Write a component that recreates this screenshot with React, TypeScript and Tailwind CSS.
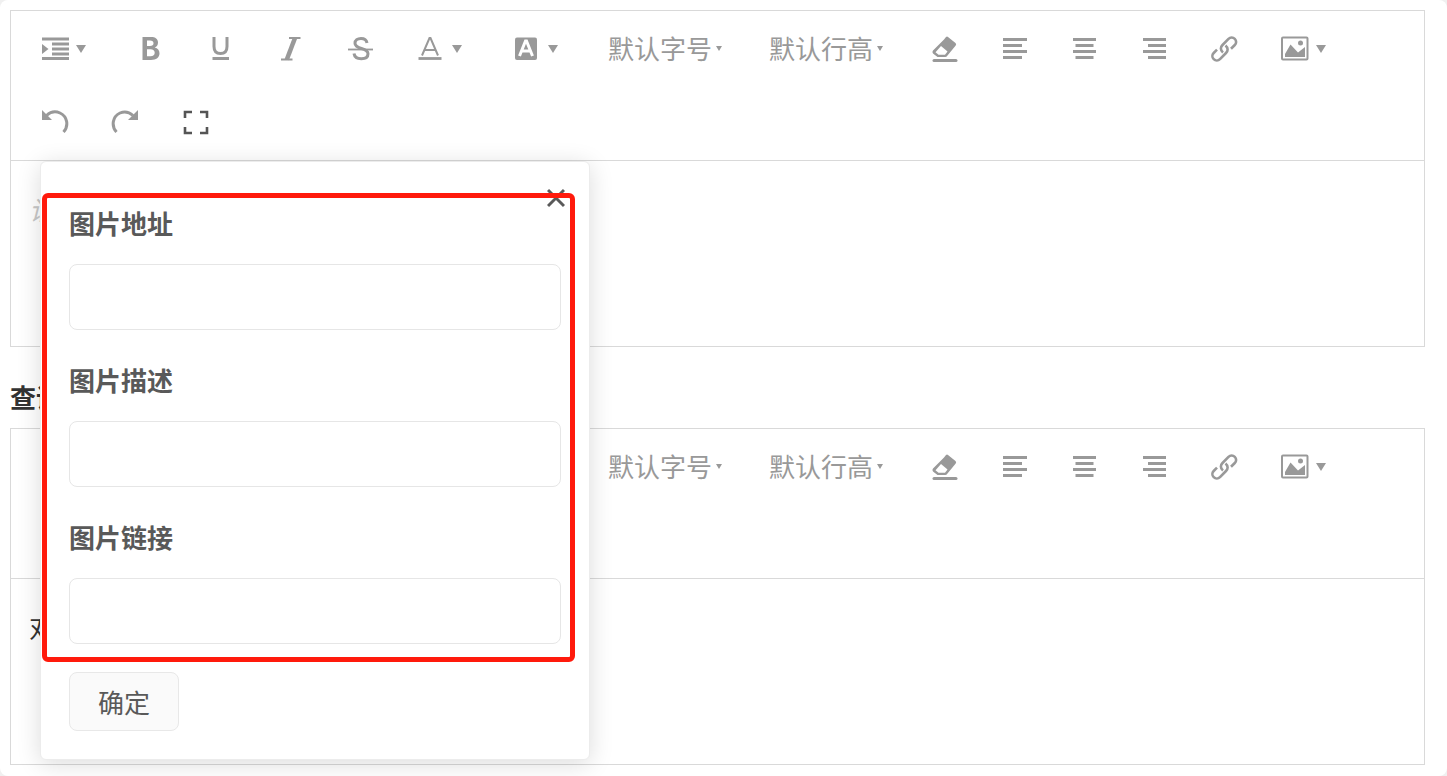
import React, { useState } from "react";

const Caret = () => (
  <svg width="12" height="8" viewBox="0 0 12 8" className="ml-1.5 shrink-0" aria-hidden="true">
    <path d="M1 0h10L6 8z" fill="currentColor" />
  </svg>
);

const SmallCaret = () => (
  <svg width="6" height="6" viewBox="0 0 6 6" className="ml-1 shrink-0" aria-hidden="true">
    <path d="M0 0h6L3 5z" fill="currentColor" />
  </svg>
);

const Icon = ({ children }: { children: React.ReactNode }) => (
  <svg
    width="28"
    height="28"
    viewBox="0 0 28 28"
    fill="none"
    stroke="currentColor"
    aria-hidden="true"
    className="shrink-0"
  >
    {children}
  </svg>
);

const icons: Record<string, React.ReactNode> = {
  indent: (
    <Icon>
      <path d="M1 4h27M1 23.500h27M11 9h17M11 14h17M11 19h17" strokeWidth="3" />
      <path d="M1 9v10l6.500-5z" fill="currentColor" stroke="none" />
    </Icon>
  ),
  bold: (
    <Icon>
      <path
        fillRule="evenodd"
        fill="currentColor"
        stroke="none"
        d="M5.500 2h8.500c4.500 0 7 2 7 5.500 0 2.500-1.200 4.300-3.300 5 3 .7 4.800 2.800 4.800 5.800 0 4.300-3.200 6.700-8.500 6.700H5.500zM10 5.500v5.500h3c2.300 0 3.500-1 3.500-2.800S15.300 5.500 13 5.500zM10 14.300v7h3.500c2.700 0 4.200-1.200 4.200-3.500s-1.500-3.500-4.200-3.500z"
      />
    </Icon>
  ),
  underline: (
    <Icon>
      <path d="M7 2v9.500c0 4.500 2.300 7 6.500 7s6.500-2.500 6.500-7V2" strokeWidth="3" />
      <path d="M5.500 23.500h16.500" strokeWidth="3" />
    </Icon>
  ),
  italic: (
    <Icon>
      <path d="M12 3H23.500M4 24.500h11.500" strokeWidth="2" />
      <path d="M18 3L9.800 24.500" strokeWidth="4.500" />
    </Icon>
  ),
  strike: (
    <Icon>
      <path
        d="M20 8c-.5-3-2.700-4.500-6-4.500-3.500 0-6 1.800-6 4.800 0 3.400 3 4.300 6.500 5.200 3.800 1 6.500 2 6.500 5.200 0 3.400-2.800 5-6.700 5-4 0-6.800-1.800-7.300-5.200"
        strokeWidth="3"
      />
      <path d="M1 14.500h25" strokeWidth="1.800" />
    </Icon>
  ),
  color: (
    <Icon>
      <path d="M5 20.500L12.500 3h1L21 20.500M8 15h10" strokeWidth="2" />
      <path d="M1.500 23.500h23" strokeWidth="2.800" />
    </Icon>
  ),
  background: (
    <Icon>
      <rect x="2" y="2.500" width="22" height="22.500" rx="2" fill="currentColor" stroke="none" />
      <path d="M6.500 21l6-15h1l6 15M9 16h8" stroke="#fff" strokeWidth="3" />
    </Icon>
  ),
  eraser: (
    <Icon>
      <path
        d="M13 4.500L15 2Q16 1 17 1.900L24.500 8Q25.700 9.200 24.700 10.500L16.500 20.500Q15.500 22 14 22H6.500L2 18.500Q.8 17 2 15.500z"
        fill="currentColor"
        stroke="none"
      />
      <path d="M10 11L16.500 16.500 14 19.700H7.500L4.500 17.200z" fill="#fff" stroke="none" />
      <path d="M3 25.500h22" strokeWidth="3" strokeLinecap="round" />
    </Icon>
  ),
  left: (
    <Icon>
      <path d="M2 4.500h24M2 10.500h19M2 16.500h24M2 22.500h19" strokeWidth="3" />
    </Icon>
  ),
  center: (
    <Icon>
      <path d="M2 4.500h23M4.500 10.500h18M2 16.500h23M4.500 22.500h18" strokeWidth="3" />
    </Icon>
  ),
  right: (
    <Icon>
      <path d="M2 4.500h23M7 10.500h18M2 16.500h23M7 22.500h18" strokeWidth="3" />
    </Icon>
  ),
  link: (
    <Icon>
      <path
        d="M12 17.500C9 15 9.500 12 11.500 10L17.500 3.800C19.300 2 22 2 23.800 3.800S25.500 8.300 23.800 10L20 13.700M14.500 10.500c3 2.500 2.500 5.500.5 7.500L9 24.200C7.200 26 4.500 26 2.700 24.200S1 19.700 2.700 18L6 14.700"
        strokeWidth="2.600"
      />
    </Icon>
  ),
  image: (
    <Icon>
      <rect x="1" y="2.500" width="25.500" height="22" rx="1" strokeWidth="2" />
      <path d="M4 22v-3l5.500-9.500 7.500 8 7-5.500V22z" fill="currentColor" stroke="none" />
      <circle cx="19.500" cy="8" r="2.500" fill="currentColor" stroke="none" />
    </Icon>
  ),
  undo: (
    <Icon>
      <path d="M5.500 6.500C9.500 2.800 14.500 2 19 4c7.500 3.500 9 13 3.500 19" strokeWidth="3" />
      <path d="M1 1v10h10z" fill="currentColor" stroke="none" />
    </Icon>
  ),
  redo: (
    <Icon>
      <path d="M22 6.500C18 2.800 13.500 2 9 4c-7.500 3.500-9 13-3.500 19" strokeWidth="3" />
      <path d="M27 1v10H17z" fill="currentColor" stroke="none" />
    </Icon>
  ),
  fullscreen: (
    <Icon>
      <path d="M4 9V3h7M19 3h7v6M4 18v6h7M19 24h7v-6" stroke="#555" strokeWidth="2.600" />
    </Icon>
  ),
};

const tools = [
  { id: "indent", label: "缩进", menu: true },
  { id: "bold", label: "加粗" },
  { id: "underline", label: "下划线" },
  { id: "italic", label: "斜体" },
  { id: "strike", label: "删除线" },
  { id: "color", label: "文字颜色", menu: true },
  { id: "background", label: "背景色", menu: true },
  { id: "size", label: "默认字号", text: true },
  { id: "lineHeight", label: "默认行高", text: true },
  { id: "eraser", label: "清除格式" },
  { id: "left", label: "左对齐" },
  { id: "center", label: "居中" },
  { id: "right", label: "右对齐" },
  { id: "link", label: "链接" },
  { id: "image", label: "图片", menu: true },
  { id: "undo", label: "撤销" },
  { id: "redo", label: "重做" },
  { id: "fullscreen", label: "全屏" },
];

const Toolbar = () => (
  <div className="flex flex-wrap border-b border-[#d9d9d9] pt-px pr-5 pl-[9px] text-[#999]">
    {tools.map((tool) => {
      if (tool.text) {
        return (
          <button
            key={tool.id}
            type="button"
            className="flex h-[74px] w-[161px] items-center pl-5 text-[26px] whitespace-nowrap"
          >
            <span className="pt-0.5">{tool.label}</span>
            <SmallCaret />
          </button>
        );
      }

      return (
        <button
          key={tool.id}
          type="button"
          aria-label={tool.label}
          className={
            tool.menu
              ? "flex h-[74px] w-24 items-center pl-[21px]"
              : "flex h-[74px] w-[70px] items-center justify-center"
          }
        >
          {icons[tool.id]}
          {tool.menu && <Caret />}
        </button>
      );
    })}
  </div>
);

const fields = [
  { id: "src", label: "图片地址" },
  { id: "alt", label: "图片描述" },
  { id: "href", label: "图片链接" },
];

const ImageDialog = ({ onClose }: { onClose: () => void }) => (
  <form
    className="absolute top-[151px] left-[30px] z-10 w-[550px] rounded-md border border-[#ececec] bg-white px-7 pt-10 pb-7 text-[26px] text-[#595959] shadow-[0_4px_24px_rgba(0,0,0,0.14)]"
    onSubmit={(event) => {
      event.preventDefault();
      onClose();
    }}
  >
    <button
      type="button"
      aria-label="关闭"
      onClick={onClose}
      className="absolute top-6 right-6"
    >
      <svg
        width="18"
        height="24"
        viewBox="0 0 18 24"
        fill="none"
        stroke="currentColor"
        strokeWidth="3"
        aria-hidden="true"
      >
        <path d="M1 4l16 16M17 4L1 20" />
      </svg>
    </button>

    <div className="flex flex-col gap-[29px]">
      {fields.map((field) => (
        <div key={field.id}>
          <label htmlFor={field.id} className="mb-4 block leading-[46px] font-bold">
            {field.label}
          </label>
          <input
            id={field.id}
            type="text"
            className="block h-[66px] w-full rounded-lg border border-[#e6e6e6] px-4 outline-none"
          />
        </div>
      ))}
    </div>

    <button
      type="submit"
      className="mt-7 block h-[59px] w-[110px] rounded-lg border border-[#e8e8e8] bg-[#fafafa] pt-1.5"
    >
      确定
    </button>

    {/* Highlight frame around the fields */}
    <div className="pointer-events-none absolute top-[31px] right-3.5 bottom-[97px] left-px rounded-md border-5 border-[#ff1a0c]" />
  </form>
);

const Editor = ({ children }: { children: React.ReactNode }) => (
  <div className="border border-[#d9d9d9]">
    <Toolbar />
    <div className="min-h-[185px] px-[18px] pt-8 text-[26px] leading-9">{children}</div>
  </div>
);

const App = () => {
  const [open, setOpen] = useState(true);

  return (
    <div className="min-h-screen bg-[#f0f0f0] font-['Liberation_Sans','Noto_Sans_CJK_SC',sans-serif]">
      <main className="min-h-screen rounded-lg bg-white pt-2.5 pr-[22px] pb-2.5 pl-2.5">
        <div className="relative">
          <Editor>
            <span className="text-[#c8c8c8] italic">请</span>
          </Editor>
          {open && <ImageDialog onClose={() => setOpen(false)} />}
        </div>
        <h2 className="pt-8 pb-[9px] text-[26px] leading-10 font-bold text-[#333]">查询</h2>
        <Editor>
          <span className="text-[#333]">对</span>
        </Editor>
      </main>
    </div>
  );
};

export default App;
